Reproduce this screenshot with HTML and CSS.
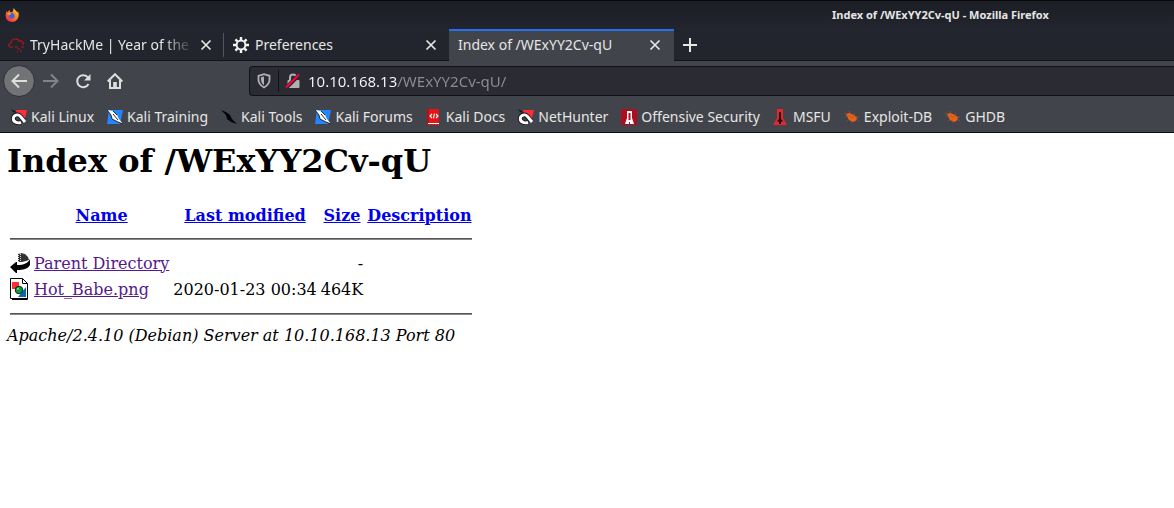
FILE: index.html
```html
<!DOCTYPE html>
<html lang="en">
<head>
<meta charset="utf-8">
<title>Index of /WExYY2Cv-qU</title>
<link rel="stylesheet" href="styles.css">
</head>
<body>
<svg class="symbols" aria-hidden="true">
  <symbol id="close" viewBox="0 0 12 12"><path d="M1.500 1.500l9 9M10.500 1.500l-9 9" stroke="currentColor" stroke-width="1.700"/></symbol>
  <symbol id="horseshoe" viewBox="0 0 16 16">
    <path d="M5 1h11l-3 12-3-2-4-6z" fill="#ff2d36"/><path d="M0 0l4 2 2 2-4-1z" fill="#15171b"/>
    <path d="M13 12L9.500 7.500C7 4.500 2.500 6 2.300 9.500c-.2 3.500 4 5 7.700 4" fill="none" stroke="#15171b" stroke-width="4.600"/>
    <path d="M14 13L9.500 7.500C7 4.500 2.500 6 2.300 9.500c-.2 3.500 4 5 7.700 4" fill="none" stroke="#fff" stroke-width="2.900"/>
  </symbol>
  <symbol id="blade" viewBox="0 0 16 16">
    <path d="M2 1h14l-3 14H0z" fill="#2386ff"/>
    <path d="M0 1l6 1 4 4 2 4 4 5-5-2-6-3-1-4z" fill="#fff"/>
    <path d="M0 1l4 5 1 4 6 3 5 2M6 2l4 4M6 5l5 6" fill="none" stroke="#15171b" stroke-width=".9"/>
  </symbol>
  <symbol id="bug" viewBox="0 0 16 16">
    <path d="M2 5l3-1 4 1.500 4 3-1 3-3 1.500-4-2z" fill="#f06414"/>
    <path d="M1 7l14 1M5 2l2 5 1 7M11 4l-2 5M0 4l8 4 7 4M3 12l4-3" fill="none" stroke="#b85b2b" stroke-width=".5"/>
  </symbol>
</svg>

<header class="chrome">
  <div class="titlebar">
    <svg class="firefox" viewBox="0 0 16 16" role="img" aria-label="Firefox">
      <defs><linearGradient id="flame" x1="1" y1="0" x2=".2" y2="1"><stop offset="0" stop-color="#ffe040"/><stop offset=".45" stop-color="#ff8a20"/><stop offset="1" stop-color="#f5204a"/></linearGradient></defs>
      <path d="M10 0c1 2 3 3 4 5l1-1c2 6-1 12-7 12S0 11 1 6l1-3 1 2 2-3 1 3 3-1z" fill="url(#flame)"/>
      <path d="M5 6c2-2 6 0 6 3 0 4-6 4-7 0l2-1z" fill="#3f62d8"/><path d="M3 6l4-1-1 3-3-1z" fill="#ff9f20"/>
    </svg>
    <span class="window-title">Index of /WExYY2Cv-qU - Mozilla Firefox</span>
  </div>

  <div class="tabs">
    <div class="tab">
      <svg class="icon" viewBox="0 0 16 16" fill="none" stroke="#b5141c" stroke-width="1.200"><path d="M5 10H3C0 10 0 6 3 6c0-5 7-5 8-2 3-1 5 2 4 4M7 10h3M9 12h3M13 10h3M12 14h2M9 15h1"/></svg>
      <button class="tab-label faded">TryHackMe | Year of the Rabbit</button>
      <button class="close" aria-label="Close TryHackMe tab"><svg><use href="#close"/></svg></button>
    </div>
    <div class="tab divided">
      <svg class="icon" viewBox="0 0 16 16" fill="none" stroke="#f4f4f4"><circle cx="8" cy="8" r="4.400" stroke-width="2"/><path d="M8 0v3M8 13v3M0 8h3M13 8h3M2.400 2.400l2 2M11.600 11.600l2 2M13.600 2.400l-2 2M4.400 11.600l-2 2" stroke-width="2.400"/></svg>
      <button class="tab-label">Preferences</button>
      <button class="close" aria-label="Close Preferences tab"><svg><use href="#close"/></svg></button>
    </div>
    <div class="tab active">
      <button class="tab-label">Index of /WExYY2Cv-qU</button>
      <button class="close" aria-label="Close Index tab"><svg><use href="#close"/></svg></button>
    </div>
    <button class="new-tab" aria-label="New tab"><svg viewBox="0 0 14 14"><path d="M7 0v14M0 7h14" stroke="currentColor" stroke-width="2"/></svg></button>
  </div>

  <div class="toolbar">
    <button class="tool back" aria-label="Back"><svg class="icon" viewBox="0 0 16 16"><path d="M16 8H1.500M8 1.500L1.500 8 8 14.500"/></svg></button>
    <button class="tool" aria-label="Forward" disabled><svg class="icon" viewBox="0 0 16 16"><path d="M0 8h14.500M8 1.500L14.500 8 8 14.500"/></svg></button>
    <button class="tool" aria-label="Reload"><svg class="icon" viewBox="0 0 16 16"><path d="M13 4.500A6 6 0 1 0 13.500 11"/><path d="M15.500 1v6.500H9z" fill="currentColor" stroke="none"/></svg></button>
    <button class="tool" aria-label="Home"><svg class="icon" viewBox="0 0 16 16"><path d="M.7 8.500L8 1.200l7.300 7.300M3 7v8h10V7"/><path d="M6.200 15V9h3.600v6z" fill="currentColor" stroke="none"/></svg></button>
    <div class="address">
      <svg class="shield" viewBox="0 0 14 16"><path d="M1.500 2.800L7 1.200l5.500 1.600v4c0 3.600-2.500 6-5.500 7.700-3-1.700-5.500-4.100-5.500-7.700z" fill="none" stroke="#b1b1b3" stroke-width="1.800"/><path d="M7 3.500v8.700C5 10.500 4 9 4 6.500V4.300z" fill="#b1b1b3"/></svg>
      <svg class="lock" viewBox="0 0 16 16"><path d="M5 7V4.500a3 3 0 0 1 6 0V7" fill="none" stroke="#b1b1b3" stroke-width="2"/><rect x="2.500" y="7" width="12" height="8" rx="1" fill="#b1b1b3"/><path d="M1 15L14.500 1.500" stroke="#2a2b33" stroke-width="4"/><path d="M1 14.500L14 1.500" stroke="#ff0039" stroke-width="2"/></svg>
      <input class="url" type="text" aria-label="Address" value="10.10.168.13/WExYY2Cv-qU/">
    </div>
  </div>

  <nav class="bookmarks" aria-label="Bookmarks">
    <a href="#"><svg class="icon"><use href="#horseshoe"/></svg>Kali Linux</a>
    <a href="#"><svg class="icon"><use href="#blade"/></svg>Kali Training</a>
    <a href="#"><svg class="icon" viewBox="0 0 16 16"><path d="M0 1l5 2 4 3 2 4 5 5-6-2-4-3-1-4z" fill="#050506"/></svg>Kali Tools</a>
    <a href="#"><svg class="icon"><use href="#blade"/></svg>Kali Forums</a>
    <a href="#"><svg class="icon" viewBox="0 0 16 16"><path d="M1 0h12v16H1z" fill="#e31519"/><path d="M1 0h2v16H1z" fill="#b90e12"/><path d="M2 14h11v1H2z" fill="#fff"/><path d="M6 5L4 7l2 2M10 5l2 2-2 2M8.500 4.500l-1 5" fill="none" stroke="#fff" stroke-width="1.100"/></svg>Kali Docs</a>
    <a href="#"><svg class="icon"><use href="#horseshoe"/></svg>NetHunter</a>
    <a href="#"><svg class="icon" viewBox="0 0 16 16"><path d="M0 0h16v16H0z" fill="#b00c20"/><path d="M6 2h5v7l2 6H9v-2H8v2H4l2-6z" fill="#fff"/><path d="M7.500 4h2v7h-2z" fill="#b00c20"/></svg>Offensive Security</a>
    <a href="#"><svg class="icon" viewBox="0 0 16 16"><path d="M4 0h6v9l4 7H0l4-7z" fill="#e5262c"/><path d="M6 3h2v7l2 2-2 1v2H6v-2l-2-1 2-2z" fill="#260b10"/></svg>MSFU</a>
    <a href="#"><svg class="icon"><use href="#bug"/></svg>Exploit-DB</a>
    <a href="#"><svg class="icon"><use href="#bug"/></svg>GHDB</a>
  </nav>
</header>

<main class="page">
  <h1>Index of /WExYY2Cv-qU</h1>
  <table class="listing">
    <tr><th></th><th><a href="#">Name</a></th><th><a href="#">Last modified</a></th><th><a href="#">Size</a></th><th><a href="#">Description</a></th></tr>
    <tr><th colspan="5"><hr></th></tr>
    <tr>
      <td class="kind"><svg class="file-icon" viewBox="0 0 20 22"><path d="M8 1l2 1 1-1 4 1 3 3 1 3-3 1-4 1H8z" fill="#333"/><path d="M8.500 1v9M10.500 2v8" stroke="#fff" stroke-width=".8" stroke-dasharray="1 1"/><path d="M20 7v6c-2 4-7 5-13 5v3H6l-6-6 6-5h1v3c7 0 11-2 13-6z" fill="#000"/></svg></td>
      <td><a class="visited" href="#">Parent Directory</a></td><td></td><td class="number">-</td><td></td>
    </tr>
    <tr>
      <td class="kind"><svg class="file-icon" viewBox="0 0 20 22"><path d="M.5.5h12l5 5v15H.5z" fill="#fff" stroke="#000"/><path d="M12.500.5v5h5" fill="none" stroke="#000"/><path d="M2 21.500h15.500V6" fill="none" stroke="#000"/><path d="M2 4h7v7H2z" fill="#ff3030"/><path d="M16 9v10H8z" fill="#0868b0"/><circle cx="9" cy="12" r="3.800" fill="#0a9b43" stroke="#000" stroke-width=".8"/><circle cx="8" cy="10.800" r="1" fill="#8fdb9b"/></svg></td>
      <td><a class="visited" href="#">Hot_Babe.png</a></td><td class="number">2020-01-23 00:34</td><td class="number">464K</td><td></td>
    </tr>
    <tr><th colspan="5"><hr></th></tr>
  </table>
  <address>Apache/2.4.10 (Debian) Server at 10.10.168.13 Port 80</address>
</main>
</body>
</html>
```
FILE: styles.css
```css
* { box-sizing: border-box; }
body {
  margin: 0;
  background: #fff;
  color: #000;
  font: 16px "DejaVu Serif", serif;
}
button {
  margin: 0;
  padding: 0;
  border: 0;
  background: none;
  color: inherit;
  font: inherit;
}
svg { display: block; flex: none; }
.symbols { position: absolute; width: 0; height: 0; }
.icon { width: 16px; height: 16px; }

.chrome {
  overflow: hidden;
  border-bottom: 1px solid #0c0c0d;
  background: #42444b;
  color: #e6e6e4;
  font: 14px/20px "Noto Sans", sans-serif;
}
.titlebar {
  display: flex;
  align-items: center;
  height: 29px;
  padding-left: 5px;
  border-top: 1px solid #08090b;
  background: linear-gradient(#1c1e26, #23252e);
}
.firefox { width: 14px; height: 14px; }
.window-title {
  margin-left: 813px;
  white-space: nowrap;
  font-size: 11px;
  font-weight: 700;
}

.tabs {
  display: flex;
  height: 32px;
  background: #23252e;
  box-shadow: inset 0 -1px #121319;
}
.tab {
  display: flex;
  align-items: center;
  flex: 0 0 225px;
  min-width: 0;
  gap: 6px;
  padding: 0 13px 0 8px;
}
.tab.divided {
  position: relative;
}
.tab.divided::before {
  content: "";
  position: absolute;
  left: -2px;
  top: 4px;
  bottom: 4px;
  width: 1px;
  background: #53555d;
}
.tab.active {
  margin-left: -1px;
  padding-left: 9px;
  background: #42444b;
  box-shadow: inset 0 2px #2470ee;
}
.tab-label {
  flex: 1;
  min-width: 0;
  overflow: hidden;
  white-space: nowrap;
  text-align: left;
}
.faded { mask-image: linear-gradient(to right, #000 80%, transparent); }
.close svg { width: 12px; height: 12px; }
.new-tab { margin-left: 9px; }
.new-tab svg { width: 14px; height: 14px; }

.toolbar {
  display: flex;
  align-items: center;
  height: 40px;
  padding-left: 3px;
}
.tool {
  display: grid;
  place-items: center;
  width: 32px;
  height: 32px;
  color: #dededd;
}
.tool path {
  fill: none;
  stroke: currentColor;
  stroke-width: 2;
}
.tool path[fill] { fill: currentColor; stroke: none; }
.tool:disabled { color: #82838a; }
.back {
  border: 1px solid #2d2e34;
  border-radius: 50%;
  background: #727377;
}
.address {
  display: flex;
  align-items: center;
  flex: 1;
  height: 30px;
  margin-left: 118px;
  padding-left: 7px;
  border: 1px solid #111217;
  border-right: 0;
  border-radius: 4px 0 0 4px;
  background: #2a2b33;
}
.shield { width: 14px; height: 16px; }
.lock {
  width: 29px;
  height: 22px;
  margin-left: 7px;
  padding: 3px 6px;
  border-left: 1px solid #111217;
}
.url {
  flex: 1;
  min-width: 0;
  height: 28px;
  margin: 0 0 0 1px;
  padding: 0;
  border: 0;
  outline: 0;
  background: linear-gradient(to right, #fafafa 89px, #8d8e94 89px);
  background-clip: text;
  -webkit-background-clip: text;
  -webkit-text-fill-color: transparent;
  color: #fafafa;
  font: inherit;
  font-size: 15px;
}
.bookmarks {
  display: flex;
  align-items: center;
  gap: 13px;
  height: 31px;
  padding-left: 11px;
}
.bookmarks a {
  display: flex;
  align-items: center;
  gap: 4px;
  color: inherit;
  text-decoration: none;
  white-space: nowrap;
}

.page { padding: 9px 7px; }
h1 {
  margin: 0 0 23px;
  font-size: 32px;
  line-height: 38px;
}
.listing { border-spacing: 2px; }
.listing th, .listing td { padding: 1px; }
.listing hr {
  height: 2px;
  margin: 9px 0 8px;
  border: 0;
  border-top: 1px solid #555;
  border-bottom: 1px solid #888;
}
.listing a { color: #0000ee; }
.listing .visited { color: #551a8b; }
.kind { vertical-align: top; }
.file-icon { width: 20px; height: 22px; }
.number { text-align: right; }
```
